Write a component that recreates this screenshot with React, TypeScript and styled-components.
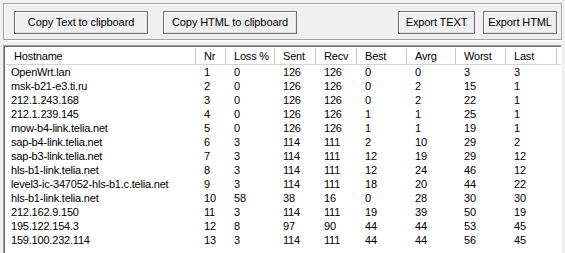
import React from "react";
import styled, { createGlobalStyle } from "styled-components";

const Global = createGlobalStyle`
  html, body { margin: 0; padding: 0; background: #f0f0f0; overflow: hidden; }
  body { font-family: "Liberation Sans", Arial, sans-serif; font-size: 11px; color: #000; }
`;

const Root = styled.div`
  width: 565px;
  height: 253px;
  box-sizing: border-box;
  padding: 3px 3px 0 3px;
  display: flex;
  flex-direction: column;
  gap: 5px;
  overflow: hidden;
`;

const Toolbar = styled.div`
  height: 37px;
  box-sizing: border-box;
  border: 1px solid #a0a0a0;
  box-shadow: inset 1px 1px 0 #fff, 1px 1px 0 #fff;
  display: flex;
  align-items: center;
  padding: 0 4px 0 10px;
`;

const Group = styled.div<{ $gap: number }>`
  display: flex;
  gap: ${(p) => p.$gap}px;
`;

const Spacer = styled.div`
  flex: 1;
`;

const Button = styled.button<{ $w: number }>`
  width: ${(p) => p.$w}px;
  height: 23px;
  box-sizing: border-box;
  border: 1px solid #707070;
  box-shadow: inset 1px 1px 0 #fff, inset -1px -1px 0 #e3e3e3;
  background: #f0f0f0;
  font-family: "Liberation Sans", Arial, sans-serif;
  font-size: 11px;
  letter-spacing: -0.1px;
  color: #000;
  padding: 0;
  margin-top: 1px;
`;

const ListFrame = styled.div`
  flex: 1;
  box-sizing: border-box;
  border-top: 1px solid #a0a0a0;
  border-left: 1px solid #a0a0a0;
  border-right: 1px solid #fff;
  background: #fff;
  box-shadow: inset 1px 1px 0 #696969;
  padding: 2px 0 0 2px;
  overflow: hidden;
`;

const Table = styled.div`
  display: grid;
  grid-template-columns: 190px 30px 49px 41px 41px 50px 49px 50px 51px 1fr;
  letter-spacing: -0.2px;
`;

const Head = styled.div<{ $last?: boolean }>`
  height: 17px;
  box-sizing: border-box;
  border-bottom: 1px solid #d5d5d5;
  border-right: ${(p) => (p.$last ? "none" : "1px solid #c8c8c8")};
  padding-left: 8px;
  display: flex;
  align-items: center;
  white-space: nowrap;
  background: #fff;
`;

const Cell = styled.div<{ $first?: boolean }>`
  height: 14px;
  line-height: 14px;
  padding-left: ${(p) => (p.$first ? 5 : 8)}px;
  white-space: nowrap;
  overflow: hidden;
`;

const headers = ["Hostname", "Nr", "Loss %", "Sent", "Recv", "Best", "Avrg", "Worst", "Last", ""];

const rows: (string | number)[][] = [
  ["OpenWrt.lan", 1, 0, 126, 126, 0, 0, 3, 3],
  ["msk-b21-e3.ti.ru", 2, 0, 126, 126, 0, 2, 15, 1],
  ["212.1.243.168", 3, 0, 126, 126, 0, 2, 22, 1],
  ["212.1.239.145", 4, 0, 126, 126, 1, 1, 25, 1],
  ["mow-b4-link.telia.net", 5, 0, 126, 126, 1, 1, 19, 1],
  ["sap-b4-link.telia.net", 6, 3, 114, 111, 2, 10, 29, 2],
  ["sap-b3-link.telia.net", 7, 3, 114, 111, 12, 19, 29, 12],
  ["hls-b1-link.telia.net", 8, 3, 114, 111, 12, 24, 46, 12],
  ["level3-ic-347052-hls-b1.c.telia.net", 9, 3, 114, 111, 18, 20, 44, 22],
  ["hls-b1-link.telia.net", 10, 58, 38, 16, 0, 28, 30, 30],
  ["212.162.9.150", 11, 3, 114, 111, 19, 39, 50, 19],
  ["195.122.154.3", 12, 8, 97, 90, 44, 44, 53, 45],
  ["159.100.232.114", 13, 3, 114, 111, 44, 44, 56, 45],
];

export default function App() {
  return (
    <>
      <Global />
      <Root>
        <Toolbar>
          <Group $gap={15}>
            <Button $w={134}>Copy Text to clipboard</Button>
            <Button $w={134}>Copy HTML to clipboard</Button>
          </Group>
          <Spacer />
          <Group $gap={8}>
            <Button $w={77}>Export TEXT</Button>
            <Button $w={74}>Export HTML</Button>
          </Group>
        </Toolbar>
        <ListFrame>
          <Table>
            {headers.map((h, i) => (
              <Head key={i} $last={i === headers.length - 1}>
                {h}
              </Head>
            ))}
            {rows.map((r, ri) => (
              <React.Fragment key={ri}>
                {r.map((c, ci) => (
                  <Cell key={ci} $first={ci === 0}>
                    {c}
                  </Cell>
                ))}
                <Cell />
              </React.Fragment>
            ))}
          </Table>
        </ListFrame>
      </Root>
    </>
  );
}
